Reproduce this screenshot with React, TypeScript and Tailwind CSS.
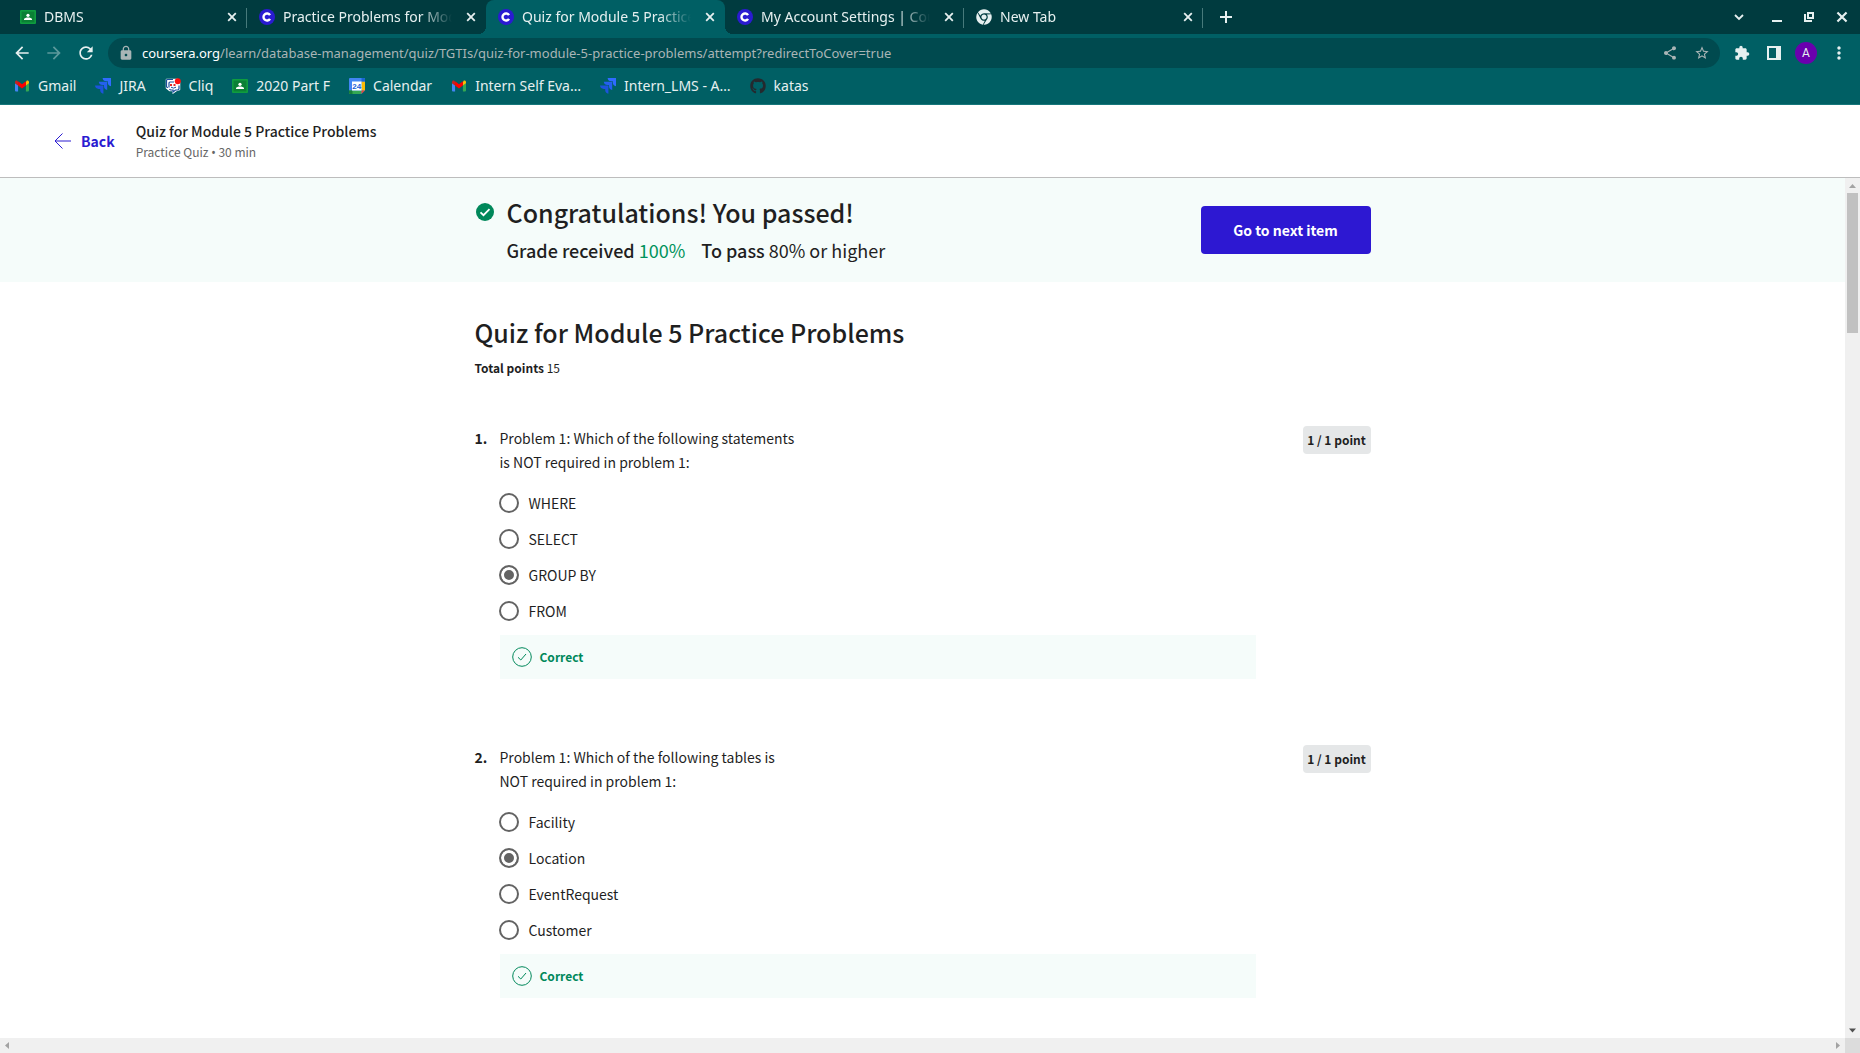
import { useState } from "react";
import type { ReactNode } from "react";
import {
  MdArrowBack,
  MdArrowForward,
  MdExtension,
  MdLock,
  MdMoreVert,
  MdRefresh,
  MdShare,
  MdStarBorder,
} from "react-icons/md";
import { FaChrome, FaGithub } from "react-icons/fa";

function ClassroomIcon() {
  return (
    <svg viewBox="0 0 16 16" className="size-4 shrink-0" aria-hidden="true">
      <rect y="1" width="16" height="14" rx="1" fill="#0f9d3f" />
      <rect x="1.6" y="2.6" width="12.8" height="10.8" fill="#0b8035" />
      <circle cx="8" cy="6.3" r="1.6" fill="#fff" />
      <path d="M4 11V10.2C4 8.9 6.4 8.4 8 8.4s4 .5 4 1.8V11z" fill="#fff" />
    </svg>
  );
}

function CourseraIcon() {
  return (
    <svg viewBox="0 0 16 16" className="size-4 shrink-0" aria-hidden="true">
      <circle cx="8" cy="8" r="8" fill="#2a1bd1" />
      <path d="M11 6.2A3.5 3.5 0 1 0 11 9.8" fill="none" stroke="#fff" strokeWidth="2.4" />
    </svg>
  );
}

function GmailIcon() {
  return (
    <svg viewBox="0 0 16 16" className="size-4 shrink-0" aria-hidden="true">
      <path d="M1 4.5v8.1c0 .5.4.9.9.9h2.2V7.2L1 4.9z" fill="#4285f4" />
      <path d="M15 4.5v8.1c0 .5-.4.9-.9.9h-2.2V7.2L15 4.9z" fill="#34a853" />
      <path d="M11.9 4.2v3.4L15 5.3V4c0-1.3-1.4-2-2.4-1.3z" fill="#fbbc04" />
      <path d="M4.1 4.2v3.4L1 5.3V4c0-1.3 1.4-2 2.4-1.3z" fill="#c5221f" />
      <path d="M4.1 7.6V3.3L8 6.2l3.9-2.9v4.3L8 10.5z" fill="#ff0000" />
    </svg>
  );
}

function JiraIcon() {
  return (
    <svg viewBox="0 0 16 16" className="size-4 shrink-0" aria-hidden="true">
      <path d="M7.6 0H16v8.2a4 4 0 0 1-3.2-3.8V3.3h-1.5A3.8 3.8 0 0 1 7.6 0z" fill="#2f6bff" />
      <path d="M3.8 3.8h8.4V12A4 4 0 0 1 9 8.2V7.1H7.5A3.8 3.8 0 0 1 3.8 3.8z" fill="#2460ee" />
      <path d="M0 7.6h8.4v8.2a4 4 0 0 1-3.2-3.8v-1.1H3.7A3.8 3.8 0 0 1 0 7.6z" fill="#1c54dc" />
    </svg>
  );
}

function CliqIcon() {
  return (
    <svg viewBox="0 0 16 16" className="size-4 shrink-0" aria-hidden="true">
      <path
        d="M1.500 1.500h11l2 3v7l-3 1L8 15v-2.500H4.500L1.500 10z"
        fill="#fff"
        stroke="#fff"
        strokeWidth="1.500"
        strokeLinejoin="round"
      />
      <path
        d="M8 1.500H2.500Q1.500 1.500 1.500 2.500V8.500q0 1 1.500 1M4 9.500V5q0-1 1-1h4M14 7.500V10.500q0 1.500-1.500 1.500H10.500L8 14v-2H6q-1 0-1.500-1"
        fill="none"
        stroke="#1c4f9c"
        strokeWidth="1.200"
      />
      <rect x="5" y="6" width="2" height="2" fill="#e42527" />
      <rect x="8.500" y="6" width="2" height="2" fill="#e42527" />
      <path d="M6 9.200q2.500 1.800 5 0" fill="none" stroke="#1c4f9c" />
      <circle cx="12.800" cy="3.200" r="3" fill="#ff1010" />
    </svg>
  );
}

function CalendarIcon() {
  return (
    <svg viewBox="0 0 16 16" className="size-4 shrink-0" aria-hidden="true">
      <rect width="16" height="16" rx="1" fill="#4285f4" />
      <path d="M12.5 3.5H16v9h-3.5z" fill="#fbbc04" />
      <path d="M0 12.5h12.5V16H1q-1 0-1-1z" fill="#34a853" />
      <path d="M0 12.5h3.5V16H1q-1 0-1-1z" fill="#188038" />
      <path d="M12.5 0H15q1 0 1 1v2.5h-3.5z" fill="#1967d2" />
      <path d="M12.5 12.5H16L12.5 16z" fill="#ea4335" />
      <path d="M16 12.5V16h-3.5z" fill="#005f64" />
      <rect x="3" y="3.5" width="9.5" height="9" fill="#fff" />
      <text
        x="7.8"
        y="11"
        textAnchor="middle"
        fontSize="8"
        fontWeight="700"
        fontFamily="Liberation Sans, sans-serif"
        fill="#1a62d8"
      >
        24
      </text>
    </svg>
  );
}

function Cross({ className }: { className: string }) {
  return (
    <svg viewBox="0 0 10 10" className={className} aria-hidden="true">
      <path d="M1.200 1.200l7.600 7.600M8.800 1.200L1.200 8.800" stroke="currentColor" strokeWidth="1.800" />
    </svg>
  );
}

type Tab = { title: string; icon: ReactNode; active?: boolean; divider?: boolean };

const tabs: Tab[] = [
  { title: "DBMS", icon: <ClassroomIcon />, divider: true },
  { title: "Practice Problems for Module 5", icon: <CourseraIcon /> },
  { title: "Quiz for Module 5 Practice Problems", icon: <CourseraIcon />, active: true },
  { title: "My Account Settings | Coursera", icon: <CourseraIcon />, divider: true },
  { title: "New Tab", icon: <FaChrome className="size-4 shrink-0" />, divider: true },
];

function TabStrip() {
  return (
    <div className="flex h-[34px] items-stretch bg-[#003b3f] pl-2">
      {tabs.map((tab) => (
        <div
          key={tab.title}
          className={
            tab.active
              ? "relative flex w-[239px] items-center rounded-t-lg bg-[#005f64] pr-2.5 pl-3"
              : "relative flex w-[239px] items-center pr-2.5 pl-3"
          }
        >
          {tab.icon}
          <span className="ml-2 flex-1 overflow-hidden whitespace-nowrap [mask-image:linear-gradient(to_right,black_calc(100%-32px),transparent)]">
            {tab.title}
          </span>
          <button aria-label={`Close ${tab.title}`} className="ml-3.5 shrink-0">
            <Cross className="size-2.5" />
          </button>
          {tab.divider && <span className="absolute top-2 right-0 h-5 w-px bg-[#477a7b]" />}
          {tab.active && (
            <>
              <span className="absolute bottom-0 -left-2 size-2 bg-[radial-gradient(circle_at_0_0,#003b3f_8px,#005f64_8px)]" />
              <span className="absolute -right-2 bottom-0 size-2 bg-[radial-gradient(circle_at_100%_0,#003b3f_8px,#005f64_8px)]" />
            </>
          )}
        </div>
      ))}
      <button aria-label="New tab" className="ml-4 self-center">
        <svg viewBox="0 0 14 14" className="size-3.5" aria-hidden="true">
          <path d="M7 1v12M1 7h12" stroke="currentColor" strokeWidth="2" />
        </svg>
      </button>
      <div className="ml-auto flex items-center pr-3">
        <button aria-label="Search tabs" className="mr-7">
          <svg viewBox="0 0 10 10" className="size-2.5" aria-hidden="true">
            <path d="M1 3l4 4 4-4" fill="none" stroke="currentColor" strokeWidth="1.8" />
          </svg>
        </button>
        <button aria-label="Minimize" className="mr-[22px]">
          <svg viewBox="0 0 10 10" className="size-2.5" aria-hidden="true">
            <path d="M0 9h10" stroke="currentColor" strokeWidth="2" />
          </svg>
        </button>
        <button aria-label="Restore" className="mr-[22px]">
          <svg viewBox="0 0 10 10" className="size-2.5" aria-hidden="true">
            <path d="M4 1h5v5H4zM1 2v7h7" fill="none" stroke="currentColor" strokeWidth="2" />
          </svg>
        </button>
        <button aria-label="Close window">
          <Cross className="size-3" />
        </button>
      </div>
    </div>
  );
}

function Toolbar() {
  return (
    <div className="flex h-[38px] items-center bg-[#005f64] pr-3 pl-3">
      <button aria-label="Back">
        <MdArrowBack className="size-5" />
      </button>
      <button aria-label="Forward" className="ml-3 opacity-40">
        <MdArrowForward className="size-5" />
      </button>
      <button aria-label="Reload" className="ml-3">
        <MdRefresh className="size-5" />
      </button>
      <div className="ml-3 flex h-[30px] flex-1 items-center rounded-full bg-[#004a4f] pr-2.5 pl-2.5 text-[#a9b5b6]">
        <MdLock className="size-4 shrink-0" />
        <div className="ml-2 flex-1 text-[13px] whitespace-nowrap">
          <span className="text-white">coursera.org</span>
          /learn/database-management/quiz/TGTIs/quiz-for-module-5-practice-problems/attempt?redirectToCover=true
        </div>
        <button aria-label="Share this page">
          <MdShare className="size-4" />
        </button>
        <button aria-label="Bookmark this tab" className="ml-4">
          <MdStarBorder className="size-4" />
        </button>
      </div>
      <button aria-label="Extensions" className="ml-3.5">
        <MdExtension className="size-4" />
      </button>
      <button aria-label="Side panel" className="ml-[17px]">
        <svg viewBox="0 0 14 14" className="size-3.5" aria-hidden="true">
          <path d="M0 0h14v14H0zM2 2v10h7V2z" fill="currentColor" fillRule="evenodd" />
        </svg>
      </button>
      <button
        aria-label="Profile"
        className="ml-3.5 flex size-[22px] items-center justify-center rounded-full bg-[#6a00ae] font-[Roboto,sans-serif] text-xs"
      >
        A
      </button>
      <button aria-label="Menu" className="-mr-px ml-3">
        <MdMoreVert className="size-5" />
      </button>
    </div>
  );
}

const bookmarks = [
  { label: "Gmail", icon: <GmailIcon /> },
  { label: "JIRA", icon: <JiraIcon /> },
  { label: "Cliq", icon: <CliqIcon /> },
  { label: "2020 Part F", icon: <ClassroomIcon /> },
  { label: "Calendar", icon: <CalendarIcon /> },
  { label: "Intern Self Eva…", icon: <GmailIcon /> },
  { label: "Intern_LMS - A…", icon: <JiraIcon /> },
  { label: "katas", icon: <FaGithub className="size-4 shrink-0 text-[#24292e]" /> },
];

function BookmarksBar() {
  return (
    <nav className="flex h-[33px] items-center gap-[19px] border-b border-[#17777b] bg-[#005f64] pb-1 pl-3.5">
      {bookmarks.map((b) => (
        <a key={b.label} href="#" className="flex items-center gap-2 whitespace-nowrap">
          {b.icon}
          {b.label}
        </a>
      ))}
    </nav>
  );
}

function PageHeader() {
  return (
    <header className="flex h-[73px] shrink-0 items-center border-b border-[#bdbdbd] bg-white pl-[54px]">
      <a href="#" className="flex items-center gap-2.5 text-sm leading-6 font-bold text-[#2a1bd1]">
        <svg viewBox="0 0 17 16" className="h-4 w-[17px]" aria-hidden="true">
          <path d="M8.5 0.5L1 8l7.5 7.5M1 8h16" fill="none" stroke="currentColor" />
        </svg>
        Back
      </a>
      <div className="ml-[21px]">
        <div className="text-sm leading-[22px] font-medium">Quiz for Module 5 Practice Problems</div>
        <div className="text-xs leading-5 text-[#666]">
          Practice Quiz <span className="font-['Noto_Sans',sans-serif]">•</span> 30 min
        </div>
      </div>
    </header>
  );
}

function ResultBanner() {
  return (
    <section className="bg-[#f5fcfa]">
      <div className="mx-auto flex h-[104px] max-w-[896px] items-center">
        <svg viewBox="0 0 20 20" className="mb-9 size-5 shrink-0" aria-hidden="true">
          <circle cx="10" cy="10" r="9" fill="#00885a" />
          <path d="M5.5 10.3l3 2.9 6-6" fill="none" stroke="#fff" strokeWidth="1.8" />
        </svg>
        <div className="mb-1 ml-3">
          <h1 className="text-[25px] leading-9 font-medium">Congratulations! You passed!</h1>
          <p className="mt-2 flex gap-4 text-lg leading-6">
            <span>
              <b className="font-medium">Grade received</b> <span className="text-[#00935c]">100%</span>
            </span>
            <span>
              <b className="font-medium">To pass</b> 80% or higher
            </span>
          </p>
        </div>
        <button className="ml-auto h-12 w-[170px] rounded-sm bg-[#2d18d2] text-sm font-bold text-white">
          Go to next item
        </button>
      </div>
    </section>
  );
}

type QuestionData = { number: number; prompt: string; options: string[]; answer: string };

const questions: QuestionData[] = [
  {
    number: 1,
    prompt: "Problem 1: Which of the following statements\nis NOT required in problem 1:",
    options: ["WHERE", "SELECT", "GROUP BY", "FROM"],
    answer: "GROUP BY",
  },
  {
    number: 2,
    prompt: "Problem 1: Which of the following tables is\nNOT required in problem 1:",
    options: ["Facility", "Location", "EventRequest", "Customer"],
    answer: "Location",
  },
];

function Question({ number, prompt, options, answer }: QuestionData) {
  const [value, setValue] = useState(answer);
  return (
    <section className="flex items-start pb-[66px] text-sm leading-6">
      <span className="w-[25px] shrink-0 font-bold">{number}.</span>
      <fieldset className="min-w-0 flex-1">
        <legend className="whitespace-pre-line">{prompt}</legend>
        <div className="pt-[11px]">
          {options.map((option) => (
            <label key={option} className="flex h-9 items-center gap-2.5">
              <input
                type="radio"
                name={`question-${number}`}
                checked={value === option}
                onChange={() => setValue(option)}
                className="-ml-px size-5 shrink-0 appearance-none rounded-full border-2 border-[#636363] bg-white checked:bg-[#636363] checked:shadow-[inset_0_0_0_3px_white]"
              />
              {option}
            </label>
          ))}
        </div>
        <div className="mt-1.5 flex h-11 items-center gap-2 bg-[#f5fcfa] pl-3 text-xs font-bold text-[#00885a]">
          <svg viewBox="0 0 20 20" className="size-5" aria-hidden="true">
            <circle cx="10" cy="10" r="9.3" fill="none" stroke="currentColor" />
            <path d="M6 10.3l2.8 2.7L14 7" fill="none" stroke="currentColor" />
          </svg>
          Correct
        </div>
      </fieldset>
      <span className="ml-[47px] flex h-7 w-17 shrink-0 items-center justify-center rounded bg-[#e5e7e8] text-xs font-bold">
        1 / 1 point
      </span>
    </section>
  );
}

function VerticalScrollbar() {
  return (
    <div className="flex w-[15px] shrink-0 flex-col items-center bg-[#f0f0f0]" aria-hidden="true">
      <svg viewBox="0 0 15 15" className="size-[15px] shrink-0">
        <path d="M4 10L7.5 6 11 10z" fill="#a3a3a3" />
      </svg>
      <div className="h-[140px] w-[11px] bg-[#c1c1c1]" />
      <svg viewBox="0 0 15 15" className="mt-auto size-[15px] shrink-0">
        <path d="M4 5.5L7.5 9.5 11 5.5z" fill="#505050" />
      </svg>
    </div>
  );
}

function HorizontalScrollbar() {
  return (
    <div className="flex h-[15px] shrink-0 justify-between bg-[#f0f0f0]" aria-hidden="true">
      <svg viewBox="0 0 15 15" className="size-[15px]">
        <path d="M9 4L5 7.5 9 11z" fill="#a3a3a3" />
      </svg>
      <div className="flex">
        <svg viewBox="0 0 15 15" className="size-[15px]">
          <path d="M6 4l4 3.5L6 11z" fill="#a3a3a3" />
        </svg>
        <div className="size-[15px] bg-[#dcdcdc]" />
      </div>
    </div>
  );
}

export default function App() {
  return (
    <div className="flex h-screen flex-col overflow-hidden bg-white font-['Noto_Sans_CJK_SC',sans-serif] text-[#1f1f1f]">
      <div className="shrink-0 font-['Noto_Sans',sans-serif] text-sm text-[#e6f0f0]">
        <TabStrip />
        <Toolbar />
        <BookmarksBar />
      </div>
      <PageHeader />
      <div className="flex min-h-0 flex-1">
        <main className="min-w-0 flex-1 overflow-hidden">
          <ResultBanner />
          <div className="mx-auto max-w-[896px] pt-8">
            <h2 className="text-[25px] leading-9 font-medium">Quiz for Module 5 Practice Problems</h2>
            <p className="mt-2 text-xs leading-5">
              <b className="font-bold">Total points</b> 15
            </p>
            <div className="pt-12">
              {questions.map((q) => (
                <Question key={q.number} {...q} />
              ))}
            </div>
          </div>
        </main>
        <VerticalScrollbar />
      </div>
      <HorizontalScrollbar />
    </div>
  );
}
